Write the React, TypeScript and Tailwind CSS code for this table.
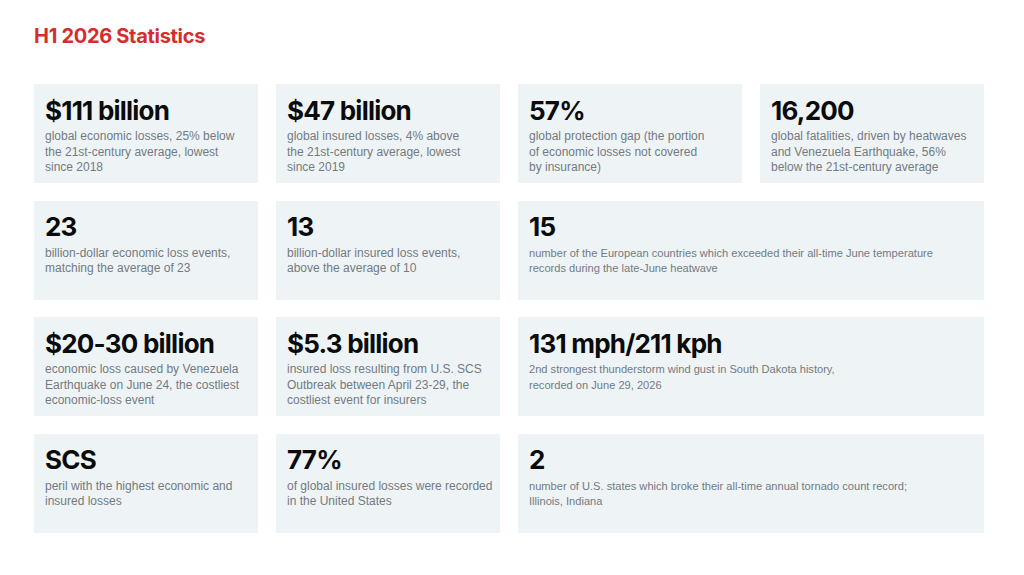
import React from 'react';

type Stat = {
  value: string;
  lines: string[];
  wide?: boolean;
};

const STATS: Stat[] = [
  { value: '$111 billion', lines: ['global economic losses, 25% below', 'the 21st-century average, lowest', 'since 2018'] },
  { value: '$47 billion', lines: ['global insured losses, 4% above', 'the 21st-century average, lowest', 'since 2019'] },
  { value: '57%', lines: ['global protection gap (the portion', 'of economic losses not covered', 'by insurance)'] },
  { value: '16,200', lines: ['global fatalities, driven by heatwaves', 'and Venezuela Earthquake, 56%', 'below the 21st-century average'] },
  { value: '23', lines: ['billion-dollar economic loss events,', 'matching the average of 23'] },
  { value: '13', lines: ['billion-dollar insured loss events,', 'above the average of 10'] },
  {
    value: '15',
    lines: ['number of the European countries which exceeded their all-time June temperature', 'records during the late-June heatwave'],
    wide: true,
  },
  { value: '$20-30 billion', lines: ['economic loss caused by Venezuela', 'Earthquake on June 24, the costliest', 'economic-loss event'] },
  { value: '$5.3 billion', lines: ['insured loss resulting from U.S. SCS', 'Outbreak between April 23-29, the', 'costliest event for insurers'] },
  {
    value: '131 mph/211 kph',
    lines: ['2nd strongest thunderstorm wind gust in South Dakota history,', 'recorded on June 29, 2026'],
    wide: true,
  },
  { value: 'SCS', lines: ['peril with the highest economic and', 'insured losses'] },
  { value: '77%', lines: ['of global insured losses were recorded', 'in the United States'] },
  {
    value: '2',
    lines: ['number of U.S. states which broke their all-time annual tornado count record;', 'Illinois, Indiana'],
    wide: true,
  },
];

function StatCard({ stat }: { stat: Stat }) {
  return (
    <div className={`${stat.wide ? 'col-span-2' : ''} bg-[#eef4f6] px-[11px] pt-[13.5px]`}>
      <div className="font-['Inter',sans-serif] text-[26px] leading-[26px] font-bold tracking-[-0.03em] text-[#0b0b0b]">
        {stat.value}
      </div>
      <p
        className={`${stat.wide ? 'text-[11.1px]' : 'text-[12px]'} mt-[5.5px] whitespace-nowrap font-['Liberation_Sans',Arial,sans-serif] leading-[15.5px] text-[#737a82]`}
      >
        {stat.lines.map((line, i) => (
          <React.Fragment key={i}>
            {i > 0 && <br />}
            {line}
          </React.Fragment>
        ))}
      </p>
    </div>
  );
}

export default function App() {
  return (
    <div className="w-[1024px] h-[575px] bg-white pl-[34px] pt-6 overflow-hidden">
      <h1 className="font-['Inter',sans-serif] text-[20px] leading-6 font-bold tracking-[-0.015em] text-[#d52d2f]">
        H1 2026 Statistics
      </h1>

      <div className="mt-9 grid w-[950px] grid-cols-4 auto-rows-[99px] gap-x-[18px] gap-y-[17.5px]">
        {STATS.map((stat) => (
          <StatCard key={stat.value} stat={stat} />
        ))}
      </div>
    </div>
  );
}
